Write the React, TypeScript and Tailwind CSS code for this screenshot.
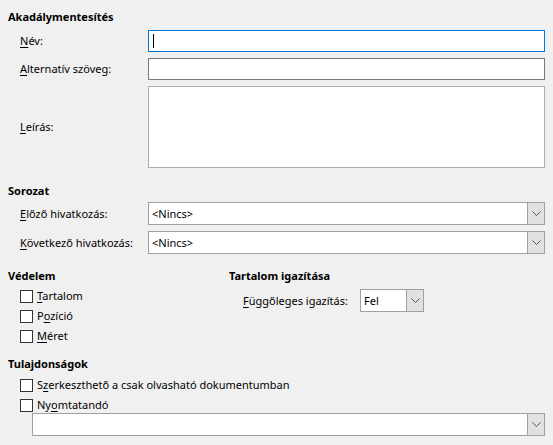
import React from 'react';

const Chevron = () => (
    <svg width="9" height="5" viewBox="0 0 9 5" className="block">
        <path d="M0.5 0.5 L4.5 4.5 L8.5 0.5" fill="none" stroke="#555" strokeWidth="1" />
    </svg>
);

const Select: React.FC<{ value?: string; className?: string }> = ({ value = '', className = '' }) => (
    <div className={`flex h-[23px] bg-white border border-[#a0a0a0] ${className}`}>
        <div className="flex-1 flex items-center pl-[3px] leading-none">{value}</div>
        <div className="w-[17px] flex items-center justify-center bg-[#e1e1e1] border-l border-[#a0a0a0]">
            <Chevron />
        </div>
    </div>
);

const Check: React.FC<{ children: React.ReactNode }> = ({ children }) => (
    <div className="flex items-center h-[20px] gap-[4px]">
        <div className="w-[13px] h-[13px] bg-white border border-[#333]" />
        <span>{children}</span>
    </div>
);

const Heading: React.FC<{ children: React.ReactNode; className?: string }> = ({ children, className = '' }) => (
    <div className={`font-bold leading-[16px] ${className}`}>{children}</div>
);

const U: React.FC<{ children: React.ReactNode }> = ({ children }) => (
    <span className="underline underline-offset-2">{children}</span>
);

export default function App() {
    return (
        <div
            className="w-[553px] h-[445px] bg-[#f0f0f0] text-black text-[11px] leading-[16px] overflow-hidden pl-[8px] pt-[9px]"
            style={{ fontFamily: '"Noto Sans", sans-serif' }}
        >
            <Heading>Akadálymentesítés</Heading>
            <div className="grid grid-cols-[128px_397px] pl-[12px] mt-[5px] gap-y-[6px]">
                <div className="flex items-center"><U>N</U>év:</div>
                <div className="h-[22px] bg-white border border-[#0078d7] flex items-center pl-[4px]">
                    <div className="w-px h-[14px] bg-black" />
                </div>
                <div className="flex items-center"><U>A</U>lternatív szöveg:</div>
                <div className="h-[22px] bg-white border border-[#7a7a7a]" />
                <div className="flex items-center"><U>L</U>eírás:</div>
                <div className="h-[82px] bg-white border border-[#adadad]" />
            </div>

            <Heading className="mt-[15px]">Sorozat</Heading>
            <div className="grid grid-cols-[128px_397px] pl-[12px] mt-[3px] gap-y-[6px]">
                <div className="flex items-center"><U>E</U>lőző hivatkozás:</div>
                <Select value="<Nincs>" />
                <div className="flex items-center"><U>K</U>övetkező hivatkozás:</div>
                <Select value="<Nincs>" />
            </div>

            <div className="flex mt-[14px]">
                <div className="w-[221px]">
                    <Heading>Védelem</Heading>
                    <div className="pl-[12px] mt-[2px]">
                        <Check><U>T</U>artalom</Check>
                        <Check>P<U>o</U>zíció</Check>
                        <Check><U>M</U>éret</Check>
                    </div>
                </div>
                <div>
                    <Heading>Tartalom igazítása</Heading>
                    <div className="flex items-center pl-[14px] mt-[5px]">
                        <div className="w-[117px]"><U>F</U>üggőleges igazítás:</div>
                        <Select value="Fel" className="w-[64px]" />
                    </div>
                </div>
            </div>

            <Heading className="mt-[10px]">Tulajdonságok</Heading>
            <div className="pl-[12px] mt-[3px]">
                <Check>S<U>z</U>erkeszthető a csak olvasható dokumentumban</Check>
                <Check>Ny<U>o</U>mtatandó</Check>
                <Select className="ml-[12px] w-[513px] mt-[-2px]" />
            </div>
        </div>
    );
}
